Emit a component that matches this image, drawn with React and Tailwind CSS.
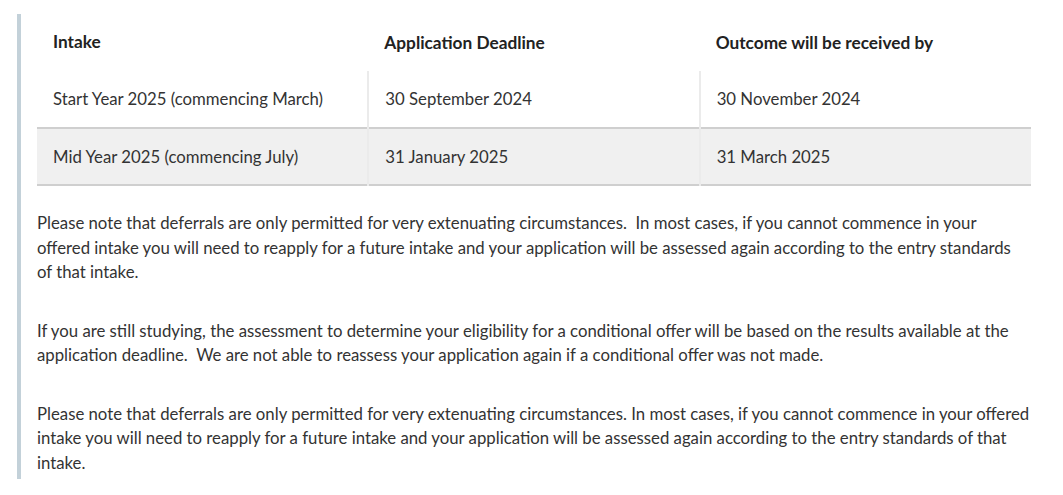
export default function App() {
  const rows = [
    ["Start Year 2025 (commencing March)", "30 September 2024", "30 November 2024"],
    ["Mid Year 2025 (commencing July)", "31 January 2025", "31 March 2025"],
  ];

  return (
    <div className="bg-white min-h-[495px] pt-[14px] pl-[17px] pr-[32px] text-[#333] text-[16.75px]" style={{ fontFamily: "Lato, 'Liberation Sans', sans-serif" }}>
      <div className="border-l-4 border-[#c3d1d9] pl-4 pb-1">
        <table className="w-full border-collapse table-fixed">
          <thead>
            <tr className="text-[17.25px]">
              <th className="text-left font-bold text-[#222] px-4 h-[57px] pb-[1px]">Intake</th>
              <th className="text-left font-bold text-[#222] px-4">Application Deadline</th>
              <th className="text-left font-bold text-[#222] px-4">Outcome will be received by</th>
            </tr>
          </thead>
          <tbody>
            {rows.map((r, i) => (
              <tr key={i} className={i % 2 === 1 ? "bg-[#f0f0f0] border-b-2 border-[#cfcfcf]" : "border-b-2 border-[#cfcfcf]"}>
                {r.map((c, j) => (
                  <td key={j} className={"px-4 h-[57px] " + (j > 0 ? "border-l-2 border-[#ebebeb]" : "")}>
                    {c}
                  </td>
                ))}
              </tr>
            ))}
          </tbody>
        </table>

        <p className="mt-[25px] leading-[24.5px] pr-[20px]">
          Please note that deferrals are only permitted for very extenuating circumstances.&nbsp; In most cases, if you cannot commence in your offered intake you will need to reapply for a future intake and your application will be assessed again according to the entry standards of that intake.
        </p>
        <p className="mt-[34px] leading-[24.5px]">
          If you are still studying, the assessment to determine your eligibility for a conditional offer will be based on the results available at the application deadline.&nbsp; We are not able to reassess your application again if a conditional offer was not made.
        </p>
        <p className="mt-[34px] leading-[24.5px]">
          Please note that deferrals are only permitted for very extenuating circumstances. In most cases, if you cannot commence in your offered intake you will need to reapply for a future intake and your application will be assessed again according to the entry standards of that intake.
        </p>
      </div>
    </div>
  );
}
